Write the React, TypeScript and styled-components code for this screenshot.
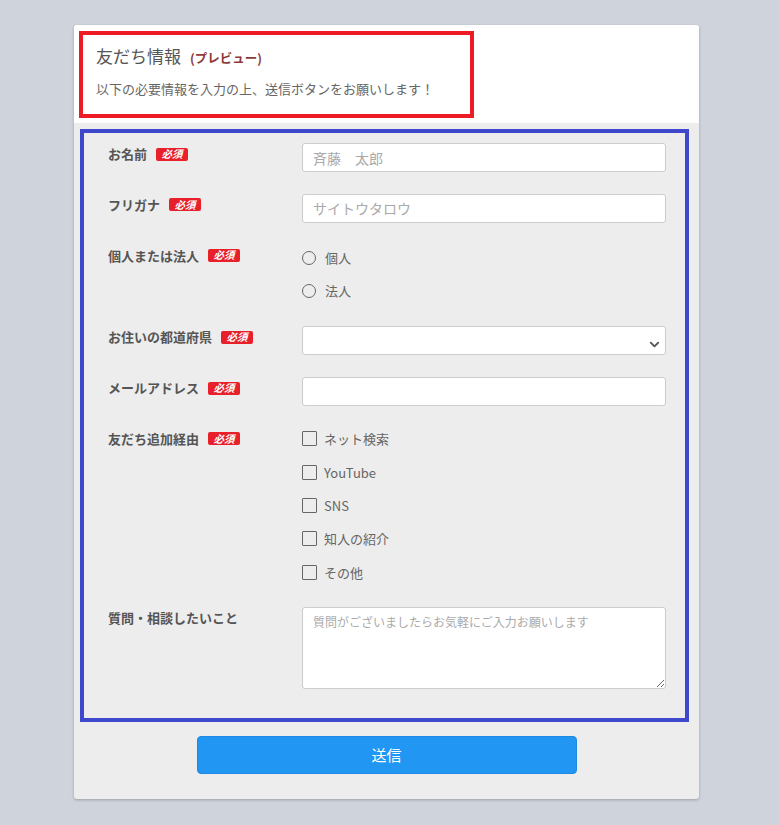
import styled, {createGlobalStyle} from 'styled-components';
import {ChevronDown} from 'lucide-react';

const GlobalStyle = createGlobalStyle`
  body {
    margin: 0;
    background: #cfd3dc;
    font-family: 'Noto Sans CJK JP', 'Noto Sans', sans-serif;
  }
`;

const sources = ['ネット検索', 'YouTube', 'SNS', '知人の紹介', 'その他'];

const Badge = () => <BadgeStyle>必須</BadgeStyle>;

export default () => {
  return (
      <>
        <GlobalStyle/>
        <PageStyle>
          <CardStyle>
            <HeaderStyle>
              <HeaderBoxStyle>
                <TitleStyle>友だち情報<PreviewStyle>(プレビュー)</PreviewStyle></TitleStyle>
                <DescriptionStyle>以下の必要情報を入力の上、送信ボタンをお願いします！</DescriptionStyle>
              </HeaderBoxStyle>
            </HeaderStyle>
            <BodyStyle>
              <FormBoxStyle>
                <RowStyle>
                  <LabelStyle>お名前<Badge/></LabelStyle>
                  <InputStyle placeholder="斉藤　太郎"/>
                </RowStyle>
                <RowStyle>
                  <LabelStyle>フリガナ<Badge/></LabelStyle>
                  <InputStyle placeholder="サイトウタロウ"/>
                </RowStyle>
                <RowStyle>
                  <LabelStyle>個人または法人<Badge/></LabelStyle>
                  <OptionListStyle $radio>
                    <OptionStyle><RadioStyle type="radio" name="kind"/>個人</OptionStyle>
                    <OptionStyle><RadioStyle type="radio" name="kind"/>法人</OptionStyle>
                  </OptionListStyle>
                </RowStyle>
                <RowStyle>
                  <LabelStyle>お住いの都道府県<Badge/></LabelStyle>
                  <SelectWrapStyle>
                    <SelectStyle defaultValue="">
                      <option value=""></option>
                    </SelectStyle>
                    <ChevronStyle>
                      <ChevronDown size={15} strokeWidth={3}/>
                    </ChevronStyle>
                  </SelectWrapStyle>
                </RowStyle>
                <RowStyle>
                  <LabelStyle>メールアドレス<Badge/></LabelStyle>
                  <InputStyle/>
                </RowStyle>
                <RowStyle>
                  <LabelStyle>友だち追加経由<Badge/></LabelStyle>
                  <OptionListStyle>
                    {sources.map((item) => (
                        <OptionStyle key={item}><CheckboxStyle type="checkbox"/>{item}</OptionStyle>
                    ))}
                  </OptionListStyle>
                </RowStyle>
                <RowStyle>
                  <LabelStyle>質問・相談したいこと</LabelStyle>
                  <TextareaStyle placeholder="質問がございましたらお気軽にご入力お願いします"/>
                </RowStyle>
              </FormBoxStyle>
              <SubmitStyle type="button">送信</SubmitStyle>
            </BodyStyle>
          </CardStyle>
        </PageStyle>
      </>
  );
}

const PageStyle = styled.div`
  padding: 25px 0 26px 74px;
`;

const CardStyle = styled.div`
  width: 625px;
  border-radius: 3px;
  overflow: hidden;
  background: #ededed;
  box-shadow: 0 1px 3px rgba(0, 0, 0, 0.25);
`;

const HeaderStyle = styled.div`
  background: #ffffff;
  padding: 6px 0 5px 5px;
`;

const HeaderBoxStyle = styled.div`
  width: 395px;
  box-sizing: border-box;
  border: 4px solid #ed1c24;
  padding: 9px 0 15px 13px;
`;

const TitleStyle = styled.div`
  font-size: 17px;
  line-height: 24px;
  color: #555555;
`;

const PreviewStyle = styled.span`
  margin-left: 9px;
  font-size: 12.5px;
  font-weight: bold;
  color: #8e3a3a;
`;

const DescriptionStyle = styled.div`
  margin-top: 9px;
  font-size: 13px;
  line-height: 20px;
  color: #666666;
`;

const BodyStyle = styled.div`
  display: flex;
  flex-direction: column;
  align-items: center;
  padding: 6px 10px 25px 6px;
`;

const FormBoxStyle = styled.div`
  align-self: stretch;
  display: flex;
  flex-direction: column;
  gap: 21.8px;
  border: 4px solid #3f48cc;
  padding: 10px 19px 29px 24px;
`;

const RowStyle = styled.div`
  display: grid;
  grid-template-columns: 194px 1fr;
  align-items: start;
`;

const LabelStyle = styled.div`
  display: flex;
  align-items: center;
  padding-top: 2px;
  font-size: 13px;
  line-height: 18px;
  font-weight: bold;
  color: #555555;
`;

const BadgeStyle = styled.span`
  display: inline-flex;
  align-items: center;
  justify-content: center;
  width: 32px;
  height: 13px;
  margin-left: 9px;
  border-radius: 2px;
  background: #e8202a;
  color: #ffffff;
  font-size: 10.5px;
  font-weight: bold;
  font-style: italic;
  line-height: 1;
`;

const InputStyle = styled.input`
  height: 29px;
  box-sizing: border-box;
  width: 100%;
  border: 1px solid #cccccc;
  border-radius: 3px;
  background: #ffffff;
  padding: 0 10px;
  font-family: inherit;
  font-size: 14px;
  color: #555555;

  &::placeholder {
    color: #aaaaaa;
  }
`;

const SelectWrapStyle = styled.div`
  position: relative;
`;

const SelectStyle = styled.select`
  appearance: none;
  height: 29px;
  box-sizing: border-box;
  width: 100%;
  border: 1px solid #cccccc;
  border-radius: 3px;
  background: #ffffff;
  padding: 0 10px;
  font-family: inherit;
  font-size: 14px;
`;

const ChevronStyle = styled.span`
  position: absolute;
  right: 4px;
  top: 7px;
  color: #555555;
  pointer-events: none;
`;

const OptionListStyle = styled.div<{ $radio?: boolean }>`
  display: flex;
  flex-direction: column;
  gap: ${props => props.$radio ? '11px' : '11.3px'};
  padding: ${props => props.$radio ? '2px 0 3px' : '0 0 2px'};
`;

const OptionStyle = styled.label`
  display: flex;
  align-items: center;
  height: 22px;
  font-size: 13px;
  color: #666666;
`;

const RadioStyle = styled.input`
  appearance: none;
  width: 14px;
  height: 14px;
  margin: 0 9px 0 0;
  border: 1px solid #666666;
  border-radius: 50%;
  background: transparent;
`;

const CheckboxStyle = styled.input`
  appearance: none;
  width: 15px;
  height: 15px;
  margin: 0 7px 0 0;
  border: 1.5px solid #666666;
  border-radius: 1px;
  background: transparent;
`;

const TextareaStyle = styled.textarea`
  height: 82px;
  box-sizing: border-box;
  width: 100%;
  border: 1px solid #cccccc;
  border-radius: 3px;
  background: #ffffff;
  padding: 5px 10px;
  font-family: inherit;
  font-size: 12px;
  color: #555555;

  &::placeholder {
    color: #aaaaaa;
  }
`;

const SubmitStyle = styled.button`
  width: 380px;
  height: 38px;
  margin: 14px 0 0 4px;
  border: 1px solid #1e88e5;
  border-radius: 4px;
  background: #2196f3;
  color: #ffffff;
  font-family: inherit;
  font-size: 15px;
`;
